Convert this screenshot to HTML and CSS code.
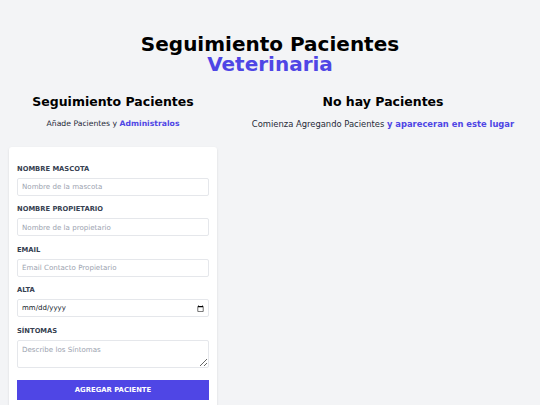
FILE: index.html
```html
<!DOCTYPE html>
<html lang="es">
<head>
<meta charset="utf-8">
<title>Seguimiento Pacientes Veterinaria</title>
<link rel="stylesheet" href="styles.css">
</head>
<body>
<div class="app">
  <h1 class="title">Seguimiento Pacientes <span class="accent">Veterinaria</span></h1>
  <div class="columns">
    <div class="col-form">
      <h2 class="col-title">Seguimiento Pacientes</h2>
      <p class="col-text col-text-sm">Añade Pacientes y <span class="accent-bold">Administralos</span></p>
      <form class="card">
        <div class="field">
          <label class="label" for="mascota">Nombre Mascota</label>
          <input class="input" id="mascota" type="text" placeholder="Nombre de la mascota">
        </div>
        <div class="field">
          <label class="label" for="propietario">Nombre Propietario</label>
          <input class="input" id="propietario" type="text" placeholder="Nombre de la propietario">
        </div>
        <div class="field">
          <label class="label" for="email">Email</label>
          <input class="input" id="email" type="email" placeholder="Email Contacto Propietario">
        </div>
        <div class="field">
          <label class="label" for="alta">Alta</label>
          <input class="input input-date" id="alta" type="date">
        </div>
        <div class="field">
          <label class="label" for="sintomas">Síntomas</label>
          <textarea class="input textarea" id="sintomas" placeholder="Describe los Síntomas"></textarea>
        </div>
        <button class="submit" type="button">Agregar Paciente</button>
      </form>
    </div>
    <div class="col-list">
      <h2 class="col-title">No hay Pacientes</h2>
      <p class="col-text col-text-md">Comienza Agregando Pacientes <span class="accent-bold">y apareceran en este lugar</span></p>
    </div>
  </div>
</div>
</body>
</html>
```

FILE: styles.css
```css
* { box-sizing: border-box; }

html, body {
  margin: 0;
  padding: 0;
}

body {
  background: #f3f4f6;
  font-family: "DejaVu Sans", sans-serif;
  color: #111827;
  overflow: hidden;
}

.app {
  padding-top: 34px;
}

.title {
  margin: 0 auto;
  width: 300px;
  text-align: center;
  font-size: 20px;
  line-height: 20px;
  font-weight: 900;
  color: #000;
}

.accent {
  color: #4f46e5;
}

.columns {
  display: flex;
  margin-top: 20px;
}

.col-form {
  width: 208px;
  margin: 0 9px;
  flex: none;
}

.col-list {
  flex: 1;
}

.col-title {
  margin: 0;
  text-align: center;
  font-size: 12.5px;
  line-height: 15px;
  font-weight: 900;
  color: #000;
}

.col-text {
  margin: 10px 0 0;
  text-align: center;
  line-height: 10px;
  color: #1f2937;
}

.col-text-sm { font-size: 7.7px; }
.col-text-md { font-size: 8.4px; }

.accent-bold {
  color: #4f46e5;
  font-weight: 700;
}

.card {
  margin-top: 18px;
  background: #fff;
  border-radius: 3px;
  padding: 17.6px 8px 20px;
  box-shadow: 0 1px 3px rgba(0,0,0,0.08), 0 1px 2px rgba(0,0,0,0.04);
}

.field {
  margin-bottom: 9.5px;
}

.label {
  display: block;
  font-size: 6.75px;
  line-height: 9px;
  font-weight: 700;
  text-transform: uppercase;
  color: #374151;
  margin-bottom: 4px;
}

.input {
  display: block;
  width: 100%;
  height: 18px;
  margin: 0;
  border: 1px solid #e5e7eb;
  border-radius: 2px;
  padding: 0 4px;
  font-family: "DejaVu Sans", sans-serif;
  font-size: 7.1px;
  color: #111827;
  background: #fff;
  outline: none;
}

.input::placeholder {
  color: #9ca3af;
}

.input-date {
  font-size: 7px;
}

.input-date::-webkit-datetime-edit-text {
  padding: 0;
}

.input-date::-webkit-datetime-edit-month-field,
.input-date::-webkit-datetime-edit-day-field,
.input-date::-webkit-datetime-edit-year-field {
  padding: 0;
}

.input-date::-webkit-calendar-picker-indicator {
  width: 7px;
  height: 7px;
  padding: 0;
  margin: 0;
}

.textarea {
  height: 28px;
  padding-top: 4px;
  resize: vertical;
}

.submit {
  display: block;
  width: 100%;
  height: 20px;
  margin-top: 12.7px;
  border: 0;
  border-radius: 0;
  background: #4f46e5;
  color: #fff;
  font-family: "DejaVu Sans", sans-serif;
  font-size: 6.85px;
  font-weight: 700;
  text-transform: uppercase;
  cursor: pointer;
}
```
